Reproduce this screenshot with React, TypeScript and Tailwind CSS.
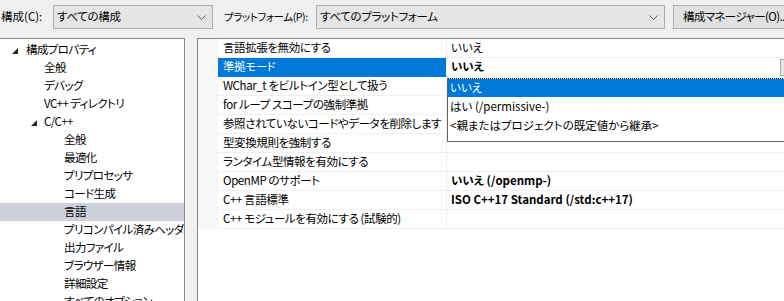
import React from "react"

const FONT = "font-['Noto_Sans_CJK_JP','Noto_Sans',sans-serif] [font-feature-settings:'palt']"

interface TreeItem {
  label: string
  level: number
  expanded?: boolean
  selected?: boolean
}

const tree: TreeItem[] = [
  { label: "構成プロパティ", level: 0, expanded: true },
  { label: "全般", level: 1 },
  { label: "デバッグ", level: 1 },
  { label: "VC++ ディレクトリ", level: 1 },
  { label: "C/C++", level: 1, expanded: true },
  { label: "全般", level: 2 },
  { label: "最適化", level: 2 },
  { label: "プリプロセッサ", level: 2 },
  { label: "コード生成", level: 2 },
  { label: "言語", level: 2, selected: true },
  { label: "プリコンパイル済みヘッダー", level: 2 },
  { label: "出力ファイル", level: 2 },
  { label: "ブラウザー情報", level: 2 },
  { label: "詳細設定", level: 2 },
  { label: "すべてのオプション", level: 2 },
]

interface Prop {
  name: string
  value?: string
  bold?: boolean
  selected?: boolean
}

const props: Prop[] = [
  { name: "言語拡張を無効にする", value: "いいえ" },
  { name: "準拠モード", value: "いいえ", bold: true, selected: true },
  { name: "WChar_t をビルトイン型として扱う" },
  { name: "for ループ スコープの強制準拠" },
  { name: "参照されていないコードやデータを削除します" },
  { name: "型変換規則を強制する" },
  { name: "ランタイム型情報を有効にする" },
  { name: "OpenMP のサポート", value: "いいえ (/openmp-)", bold: true },
  { name: "C++ 言語標準", value: "ISO C++17 Standard (/std:c++17)", bold: true },
  { name: "C++ モジュールを有効にする (試験的)" },
]

const indent = ["pl-[26px]", "pl-[44px]", "pl-[64px]"]
const arrowLeft = ["left-[12px]", "left-[31px]", "left-[51px]"]

function Chevron() {
  return (
    <svg width="9" height="5" viewBox="0 0 9 5" className="shrink-0">
      <polyline points="0.5,0.5 4.5,4.5 8.5,0.5" fill="none" stroke="#606060" strokeWidth="1" />
    </svg>
  )
}

function Combo({ text, width }: { text: string; width: string }) {
  return (
    <div className={`${width} h-[24px] flex items-center justify-between border border-[#adadad] bg-[#e5e5e5] pl-[3px] pr-[6px] shrink-0 whitespace-nowrap tracking-[-0.3px]`}>
      <span>{text}</span>
      <Chevron />
    </div>
  )
}

export default function App() {
  return (
    <div className={`w-[784px] h-[301px] overflow-hidden bg-[#f0f0f0] text-[11.5px] leading-none text-black ${FONT}`}>
      {/* toolbar */}
      <div className="h-[38px] flex items-start pt-[5px]">
        <div className="w-[53px] h-[24px] flex items-center pl-[1px] shrink-0 whitespace-nowrap">構成(C):</div>
        <Combo text="すべての構成" width="w-[160px]" />
        <div className="ml-[11px] w-[92px] h-[24px] flex items-center shrink-0 whitespace-nowrap text-[10.5px] tracking-[-0.4px]">
          プラットフォーム(P):
        </div>
        <Combo text="すべてのプラットフォーム" width="w-[349px]" />
        <div className="ml-[8px] w-[130px] h-[24px] flex items-center border border-[#adadad] bg-[#e1e1e1] pl-[9px] shrink-0 whitespace-nowrap tracking-[-0.6px]">
          構成マネージャー(O)...
        </div>
      </div>

      <div className="flex h-[263px]">
        {/* tree */}
        <div className="w-[185px] shrink-0 overflow-hidden bg-white border-t border-r border-[#828790] pt-[2px] tracking-[-0.6px]">
          {tree.map((t, i) => (
            <div
              key={i}
              className={`relative h-[18px] flex items-center whitespace-nowrap ${indent[t.level]} ${t.selected ? "bg-[#cdd0da]" : ""}`}
            >
              {t.expanded && (
                <svg width="6" height="6" viewBox="0 0 6 6" className={`absolute top-[7px] ${arrowLeft[t.level]}`}>
                  <polygon points="6,0 6,6 0,6" fill="#262626" />
                </svg>
              )}
              {t.label}
            </div>
          ))}
        </div>

        {/* property grid */}
        <div className="ml-[12px] w-[606px] shrink-0 bg-white border-t border-l border-[#828790]">
          <div className="relative">
            {props.map((p, i) => (
              <div key={i} className="flex h-[19px]">
                <div className="w-[20px] shrink-0 bg-[#f7f7f7]" />
                <div
                  className={`w-[229px] shrink-0 overflow-hidden flex items-center pl-[5px] whitespace-nowrap tracking-[-0.4px] border-b border-r border-[#f0f0f0] ${
                    p.selected ? "bg-[#0078d7] text-white border-b-[#0078d7]" : ""
                  }`}
                >
                  {p.name}
                </div>
                <div className="relative flex-1 flex items-center pl-[4px] whitespace-nowrap border-b border-[#f0f0f0]">
                  <span className={p.bold ? "font-bold" : ""}>{p.value}</span>
                  {p.selected && (
                    <div className="absolute left-[333px] top-[1px] w-[18px] h-[17px] border border-[#adadad] bg-[#e5e5e5]" />
                  )}
                </div>
              </div>
            ))}

            {/* open dropdown */}
            <div className="absolute left-[249px] top-[39px] w-[360px] h-[64px] bg-white border-x border-b border-[#646464]">
              <div className="h-px bg-[repeating-linear-gradient(90deg,#000_0_1px,#fff_1px_2px)]" />
              <div className="h-[18px] flex items-center pl-[2px] bg-[#0078d7] text-white">いいえ</div>
              <div className="h-[19px] flex items-center pl-[2px]">はい (/permissive-)</div>
              <div className="h-[19px] flex items-center pl-[2px]">&lt;親またはプロジェクトの既定値から継承&gt;</div>
            </div>
          </div>
        </div>
      </div>
    </div>
  )
}
